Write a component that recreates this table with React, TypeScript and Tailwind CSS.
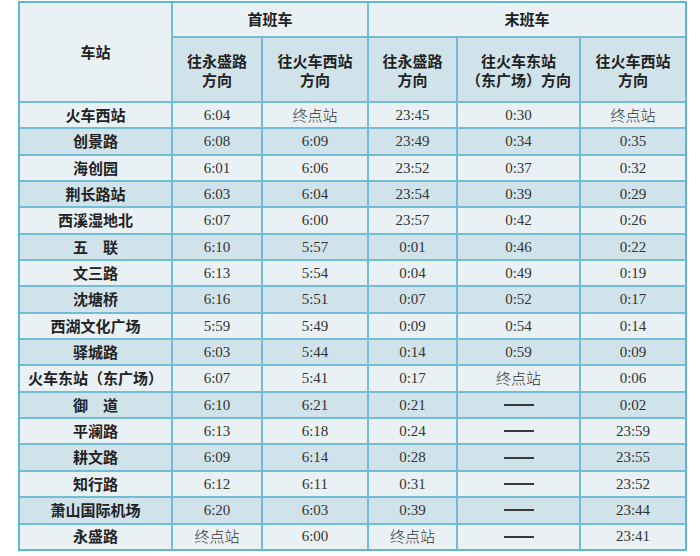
import React from "react";

const rows: string[][] = [
  ["火车西站", "6:04", "终点站", "23:45", "0:30", "终点站"],
  ["创景路", "6:08", "6:09", "23:49", "0:34", "0:35"],
  ["海创园", "6:01", "6:06", "23:52", "0:37", "0:32"],
  ["荆长路站", "6:03", "6:04", "23:54", "0:39", "0:29"],
  ["西溪湿地北", "6:07", "6:00", "23:57", "0:42", "0:26"],
  ["五\u3000联", "6:10", "5:57", "0:01", "0:46", "0:22"],
  ["文三路", "6:13", "5:54", "0:04", "0:49", "0:19"],
  ["沈塘桥", "6:16", "5:51", "0:07", "0:52", "0:17"],
  ["西湖文化广场", "5:59", "5:49", "0:09", "0:54", "0:14"],
  ["驿城路", "6:03", "5:44", "0:14", "0:59", "0:09"],
  ["火车东站（东广场）", "6:07", "5:41", "0:17", "终点站", "0:06"],
  ["御\u3000道", "6:10", "6:21", "0:21", "——", "0:02"],
  ["平澜路", "6:13", "6:18", "0:24", "——", "23:59"],
  ["耕文路", "6:09", "6:14", "0:28", "——", "23:55"],
  ["知行路", "6:12", "6:11", "0:31", "——", "23:52"],
  ["萧山国际机场", "6:20", "6:03", "0:39", "——", "23:44"],
  ["永盛路", "终点站", "6:00", "终点站", "——", "23:41"],
];

const cjk = "font-['Noto_Sans_CJK_SC',sans-serif]";
const serif = "font-['Liberation_Serif','Noto_Sans_CJK_SC',serif]";
const cell = "flex items-center justify-center border-r-2 border-b-2 border-[#72bdd5] text-center";

function Value({ v }: { v: string }) {
  if (v === "——") {
    return <span className="block h-[2px] w-[30px] bg-[#3a3a3a]" aria-label="——" />;
  }
  if (/^[0-9:]+$/.test(v)) {
    return <span className={`${serif} text-[15px] text-[#333]`}>{v}</span>;
  }
  return <span className={`${cjk} text-[15px] font-light text-[#333]`}>{v}</span>;
}

export default function App() {
  return (
    <div className="h-[556px] w-[700px] bg-white pl-[18px] pt-[1px]">
      <div className="grid w-[669px] grid-cols-[153px_90px_106px_89px_123px_106px] grid-rows-[35px_65px_repeat(17,26.35px)] border-l-2 border-t-2 border-[#5fb6d1]">
        <div className={`${cell} ${cjk} row-span-2 bg-[#e9f1f5] text-[15px] font-bold text-[#222]`}>车站</div>
        <div className={`${cell} ${cjk} col-span-2 bg-[#e9f1f5] text-[15px] font-bold text-[#222]`}>首班车</div>
        <div className={`${cell} ${cjk} col-span-3 bg-[#e9f1f5] text-[15px] font-bold text-[#222] border-r-[#5fb6d1]`}>末班车</div>
        {[
          ["往永盛路", "方向"],
          ["往火车西站", "方向"],
          ["往永盛路", "方向"],
          ["往火车东站", "（东广场）方向"],
          ["往火车西站", "方向"],
        ].map((h, i) => (
          <div
            key={i}
            className={`${cell} ${cjk} flex-col bg-[#d1e3ea] text-[15px] font-bold leading-[19px] text-[#222] ${i === 4 ? "border-r-[#5fb6d1]" : ""}`}
          >
            <span>{h[0]}</span>
            <span>{h[1]}</span>
          </div>
        ))}
        {rows.map((r, ri) => {
          const bg = ri % 2 === 0 ? "bg-[#e9f1f5]" : "bg-[#d1e3ea]";
          const last = ri === rows.length - 1 ? "border-b-[#5fb6d1]" : "";
          return r.map((v, ci) => (
            <div
              key={`${ri}-${ci}`}
              className={`${cell} ${bg} ${last} ${ci === 5 ? "border-r-[#5fb6d1]" : ""}`}
            >
              {ci === 0 ? (
                <span className={`${cjk} whitespace-nowrap text-[15px] font-bold text-[#222]`}>{v}</span>
              ) : (
                <Value v={v} />
              )}
            </div>
          ));
        })}
      </div>
    </div>
  );
}
